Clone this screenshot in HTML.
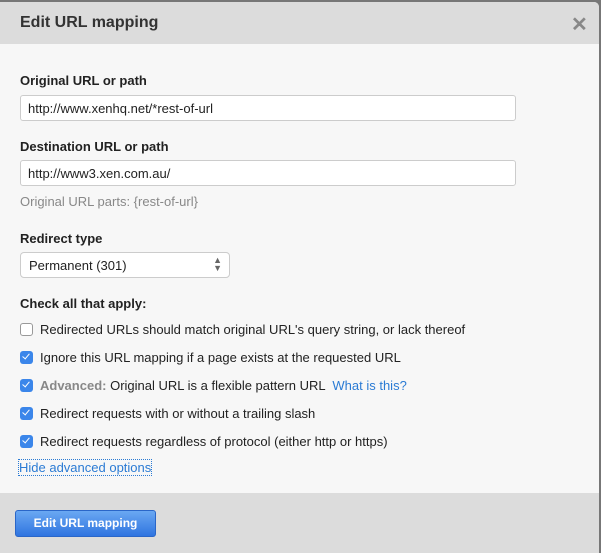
<!DOCTYPE html>
<html><head><style>
body{margin:0;width:601px;height:553px;background:#777;font-family:"Liberation Sans",Arial,sans-serif;overflow:hidden;position:relative}
.dlg{position:absolute;left:0;top:2px;width:599px;height:551px;background:#f7f7f7;border-top-right-radius:5px;overflow:hidden}
.hd{position:absolute;left:0;top:0;width:599px;height:42px;background:#dcdcdc}
.hd h1{position:absolute;left:20px;top:12px;margin:0;font-size:16px;font-weight:bold;color:#333}
.x{position:absolute;left:571px;top:10px;font-size:20px;font-weight:bold;color:#888}
.lbl{position:absolute;left:20px;font-size:13px;font-weight:bold;color:#222}
.inp{position:absolute;left:20px;width:496px;height:26px;background:#fff;border:1px solid #ccc;border-radius:3px;box-sizing:border-box;font-size:13px;color:#222;padding:5px 0 0 7px}
.sel{position:absolute;left:20px;top:250px;width:210px;height:26px;background:#fff;border:1px solid #ccc;border-radius:4px;box-sizing:border-box;font-size:13px;color:#222;padding:5px 0 0 8px}
.hint{position:absolute;left:20px;top:192px;font-size:13px;color:#888}
.row{position:absolute;left:20px;font-size:13px;color:#222}
.cb{display:inline-block;width:13px;height:13px;border-radius:3px;vertical-align:-2px;margin-right:7px;box-sizing:border-box}
.cb.off{border:1px solid #999;background:#fff}
.cb.on{background:#3b86ea;position:relative}
.cb.on:after{content:"";position:absolute;left:4px;top:1px;width:3px;height:6px;border:solid #fff;border-width:0 1.5px 1.5px 0;transform:rotate(40deg)}
a{color:#2b7bd4;text-decoration:none}
.ft{position:absolute;left:0;top:491px;width:599px;height:60px;background:#dcdcdc}
.btn{position:absolute;left:15px;top:17px;width:141px;height:27px;border-radius:3px;background:linear-gradient(#6aa8f2,#2f74e0);border:1px solid #2a66c8;box-sizing:border-box;color:#fff;font-weight:bold;font-size:12px;text-align:center;line-height:25px}
</style></head><body>
<div class="dlg">
<div class="hd"><h1>Edit URL mapping</h1><div class="x">✕</div></div>
<div class="lbl" style="top:71px">Original URL or path</div>
<div class="inp" style="top:93px">http://www.xenhq.net/*rest-of-url</div>
<div class="lbl" style="top:137px">Destination URL or path</div>
<div class="inp" style="top:158px">http://www3.xen.com.au/</div>
<div class="hint">Original URL parts: {rest-of-url}</div>
<div class="lbl" style="top:229px">Redirect type</div>
<div class="sel">Permanent (301)<span style="position:absolute;right:7px;top:3px;font-size:9px;color:#666;line-height:8px">▲<br>▼</span></div>
<div class="lbl" style="top:294px">Check all that apply:</div>
<div class="row" style="top:320px"><span class="cb off"></span>Redirected URLs should match original URL's query string, or lack thereof</div>
<div class="row" style="top:348px"><span class="cb on"></span>Ignore this URL mapping if a page exists at the requested URL</div>
<div class="row" style="top:376px"><span class="cb on"></span><b style="color:#888">Advanced:</b> Original URL is a flexible pattern URL &nbsp;<a>What is this?</a></div>
<div class="row" style="top:404px"><span class="cb on"></span>Redirect requests with or without a trailing slash</div>
<div class="row" style="top:432px"><span class="cb on"></span>Redirect requests regardless of protocol (either http or https)</div>
<div class="row" style="top:458px;left:19px;outline:1px dotted #2b7bd4"><a>Hide advanced options</a></div>
<div class="ft"><div class="btn">Edit URL mapping</div></div>
</div>
</body></html>
